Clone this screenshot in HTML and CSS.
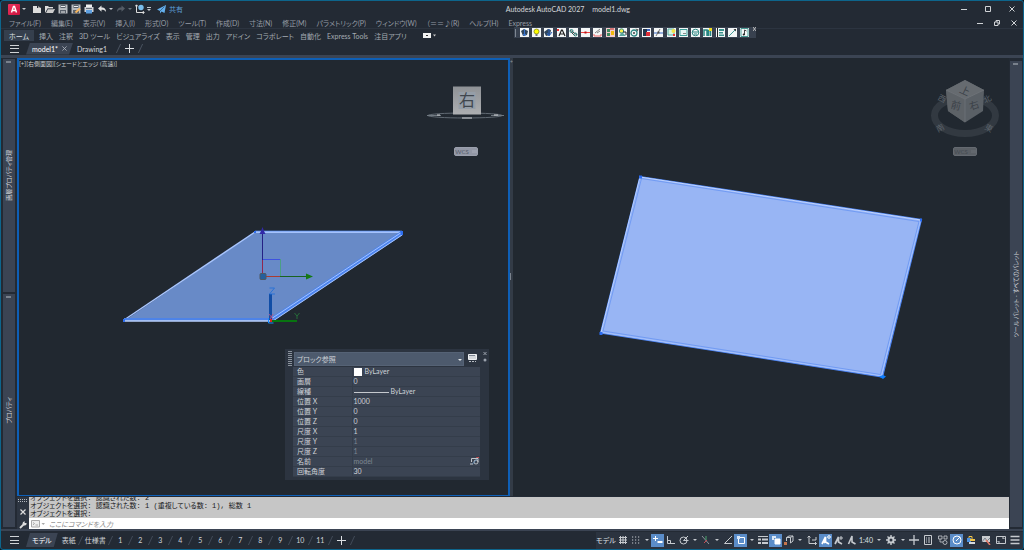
FILE: index.html
```html
<!DOCTYPE html>
<html lang="ja">
<head>
<meta charset="utf-8">
<title>Autodesk AutoCAD 2027 - model1.dwg</title>
<link rel="stylesheet" href="styles.css">
</head>
<body>
<svg class="defs" aria-hidden="true">
  <defs>
    <linearGradient id="face" x1="0" y1="0" x2="0" y2="1"><stop offset="0" stop-color="#8f9296"/><stop offset="1" stop-color="#adafb1"/></linearGradient>
    <linearGradient id="red" x1="0" y1="0" x2="1" y2="1"><stop offset="0" stop-color="#f0335f"/><stop offset="1" stop-color="#c8123c"/></linearGradient>
  </defs>
</svg>
<div class="app">
  <header class="title-bar">
    <div class="quick">
      <button class="logo" aria-label="アプリケーション"><svg width="12" height="11" viewBox="0 0 12 11"><rect width="12" height="11" rx="1" fill="url(#red)"/><path d="M3.500 8.500L5.500 2.500h1L8.500 8.500M4.500 6.500h3" stroke="#fff" stroke-width="1.400" fill="none"/></svg></button>
      <button class="caret" aria-label="メニュー"></button>
      <button class="qi first" aria-label="新規"><svg viewBox="0 0 10 10"><path d="M1 2h4v2h4v5H1z" fill="#ddd"/><path d="M6 2l3 2H6z" fill="#aaa"/></svg></button>
      <button class="qi" aria-label="開く"><svg viewBox="0 0 10 10"><path d="M0 9V2h3l1 1h4v1.500H2.500z" fill="#ddd"/><path d="M3 5h7L8 9H1z" fill="#ccc"/><path d="M2.500 5h6" stroke="#454c56" stroke-width=".7"/></svg></button>
      <button class="qi" aria-label="上書き保存"><svg viewBox="0 0 10 10"><path d="M0.500 0.500h9v9h-9z" fill="#b9bcc0"/><path d="M2.500 1h5v3h-5zM2 6h6v3.500H2z" fill="#59606a"/><path d="M3 2.500h4M3 8h4" stroke="#eee"/></svg></button>
      <button class="qi" aria-label="名前を付けて保存"><svg viewBox="0 0 10 10"><path d="M0.500 0.500h9v9h-9z" fill="#b9bcc0"/><path d="M2.500 1h5v3h-5zM2 6h6v3.500H2z" fill="#59606a"/><path d="M3 2.500h4" stroke="#eee"/><path d="M4.500 8.500L9 4.500" stroke="#f5b660" stroke-width="2"/></svg></button>
      <button class="qi" aria-label="印刷"><svg viewBox="0 0 10 10"><path d="M2 0.500h6V3H2z" fill="#eee"/><path d="M0.500 3h9v5h-9z" fill="#cfd2d6"/><path d="M2 6h6v3.500H2z" fill="#5e9fe0"/><path d="M2 4.500h6" stroke="#6b737d"/></svg></button>
      <button class="qi" aria-label="元に戻す"><svg viewBox="0 0 10 10"><path d="M1 4.500l3.500-3v2C8 3.500 9 5.500 9 8 8 6.300 7 5.700 4.500 5.700v2z" fill="#e3e3e3"/></svg></button>
      <button class="caret" aria-label="履歴"></button>
      <button class="qi" aria-label="やり直し"><svg viewBox="0 0 10 10"><path d="M9 4.500l-3.500-3v2C2 3.500 1 5.500 1 8c1-1.700 2-2.300 4.500-2.300v2z" fill="#555c66"/></svg></button>
      <button class="caret dim" aria-label="やり直し履歴"></button>
      <button class="qi" aria-label="UCS"><svg viewBox="0 0 10 10"><path d="M1.500 1v7.500H9M0 2.500L1.500 0.800 3 2.500M7.800 7L9.200 8.500 7.800 10" stroke="#ddd" fill="none"/><circle cx="6" cy="3.500" r="2.700" fill="#79bdec"/></svg></button>
      <button class="caret bar" aria-label="カスタマイズ"></button>
      <a class="share" href="#"><svg width="9" height="9" viewBox="0 0 9 9"><path d="M0 4.500L9 0 7.500 8 4.500 6.500 3 8.500V6z" fill="#64b0ee"/><path d="M3 6L7.500 1.500" stroke="#26405a" stroke-width=".6"/></svg>共有</a>
    </div>
    <h1 class="title"><span>Autodesk AutoCAD 2027</span><span>model1.dwg</span></h1>
    <div class="win">
      <button aria-label="最小化"><svg viewBox="0 0 6 6"><path d="M0 3.500h6"/></svg></button>
      <button aria-label="最大化"><svg viewBox="0 0 6 6"><path d="M.5.5h5v5h-5z"/></svg></button>
      <button aria-label="閉じる"><svg viewBox="0 0 6 6"><path d="M.5.5l5 5M5.500.5l-5 5"/></svg></button>
    </div>
  </header>

  <div class="menu-row">
    <nav class="menu">
      <button>ファイル(F)</button><button>編集(E)</button><button>表示(V)</button><button>挿入(I)</button><button>形式(O)</button><button>ツール(T)</button><button>作成(D)</button><button>寸法(N)</button><button>修正(M)</button><button>パラメトリック(P)</button><button>ウィンドウ(W)</button><button>（＝＝♪(R)</button><button>ヘルプ(H)</button><button>Express</button>
    </nav>
    <div class="win small">
      <button aria-label="図面を最小化"><svg viewBox="0 0 6 6"><path d="M0 3.500h6"/></svg></button>
      <button aria-label="図面を元のサイズに戻す"><svg viewBox="0 0 6 6"><path d="M.5 2h3.500v3.500H.5zM2 2V.5h3.500V4H4"/></svg></button>
      <button aria-label="図面を閉じる"><svg viewBox="0 0 6 6"><path d="M.5.5l5 5M5.500.5l-5 5"/></svg></button>
    </div>
  </div>

  <nav class="ribbon">
    <button class="on">ホーム</button><button>挿入</button><button>注釈</button><button>3D ツール</button><button>ビジュアライズ</button><button>表示</button><button>管理</button><button>出力</button><button>アドイン</button><button>コラボレート</button><button>自動化</button><button>Express Tools</button><button>注目アプリ</button>
    <button class="ribbon-min" aria-label="リボンを最小化"><svg width="14" height="5" viewBox="0 0 14 5"><path d="M0 0h8v5H0z" fill="#f2f2f2"/><path d="M3 2.500h2" stroke="#333"/><path d="M10 1.500h3L11.500 3.500z" fill="#ccc"/></svg></button>
  </nav>

  <div class="float-bar">
    <i class="grip"></i>
    <div class="tools">
      <button aria-label="画層表示"><svg viewBox="0 0 9 9"><path d="M1 3l3-2 4 2-1 4-4 1z" fill="#31465c"/><path d="M4.500 1v7M3 6l1.500 2L6 6" stroke="#3a75cf" fill="none"/></svg></button>
      <button aria-label="電球"><svg viewBox="0 0 9 9"><circle cx="4.500" cy="3.500" r="2.500" fill="#ff0" stroke="#77750e" stroke-width=".7"/><path d="M3.500 6h2v2h-2z" fill="#777"/></svg></button>
      <button aria-label="画層移動"><svg viewBox="0 0 9 9"><path d="M0 4l4-3 3 1-1 5-4 1z" fill="#31465c"/><path d="M5 1v6M3 5l2 3 3-4" stroke="#2861be" fill="none"/></svg></button>
      <button aria-label="文字"><svg viewBox="0 0 9 9"><path d="M2 8L4.500 2h.8L8 8M3 6h4" stroke="#222" fill="none" stroke-width="1.200"/><path d="M0 1h2v2H0z" fill="#e33"/></svg></button>
      <button aria-label="トリム"><svg viewBox="0 0 9 9"><path d="M1 2l7 5M2 4l4 4" stroke="#444"/><circle cx="2.500" cy="3" r="1.500" stroke="#2b8581" fill="none"/><circle cx="6.500" cy="6.500" r="1.500" stroke="#2b8581" fill="none"/></svg></button>
      <button aria-label="分割"><svg viewBox="0 0 9 9"><path d="M0 4.500h9" stroke="#e44"/><path d="M3.500 3.500h2v2h-2z" fill="#b11"/></svg></button>
      <button aria-label="寸法"><svg viewBox="0 0 9 9"><path d="M1 6V8h7V6" stroke="#e66" fill="none"/><path d="M2 5l5-4M4 5l3-2" stroke="#666" stroke-width=".8"/></svg></button>
      <button aria-label="ブロック"><svg viewBox="0 0 9 9"><path d="M0 0h9v9H0z" fill="#f3cccc"/><path d="M1 1h3v3H1zM1 5h3v3H1z" fill="#3f8b5f"/><path d="M5 3h3v4H5z" fill="#efb90d"/><path d="M4 1h4" stroke="#b22"/></svg></button>
      <button aria-label="図形"><svg viewBox="0 0 9 9"><circle cx="3.500" cy="3" r="2.200" stroke="#318886" fill="#f9ee4c"/><path d="M1 8l3-4 4 4z" fill="#5aa59e"/><path d="M5 4h3v3" stroke="#222" fill="none"/></svg></button>
      <button aria-label="回転"><svg viewBox="0 0 9 9"><circle cx="4" cy="5" r="3" stroke="#2b8581" fill="none" stroke-width="1.300"/><circle cx="4" cy="5" r="1" fill="#444"/><path d="M5.500 .5l3 1-1 2" fill="#555"/></svg></button>
      <button aria-label="グループ"><svg viewBox="0 0 9 9"><path d="M1 1h4v3H1zM1 4h3v4H1z" fill="#24374d"/><path d="M4 4h4v4H4z" fill="#df2e38"/><path d="M5 1h3v2H5z" fill="#3d63bb"/></svg></button>
      <button aria-label="点"><svg viewBox="0 0 9 9"><path d="M0 5h9" stroke="#3b6bc6"/><path d="M2 8l4-7" stroke="#777"/><path d="M3.500 3.500h2v2h-2z" fill="#4a4a4a"/></svg></button>
      <button aria-label="雲"><svg viewBox="0 0 9 9"><path d="M1 1h6v6H1z" fill="#d8f5df" stroke="#55aaa5"/><circle cx="6.500" cy="3" r="2" fill="#f3e348"/><path d="M6 6l2 2M8 6L6 8" stroke="#e33"/></svg></button>
      <button aria-label="枠"><svg viewBox="0 0 9 9"><path d="M1 1.500h7v6H1z" fill="#e8f6f4" stroke="#3c9d98"/><path d="M4 5.500h3" stroke="#888"/></svg></button>
      <button aria-label="ポリゴン"><svg viewBox="0 0 9 9"><circle cx="4.500" cy="4.500" r="3.300" fill="none" stroke="#2a8581"/><path d="M1 4h7M3 6h3" stroke="#2a8581"/></svg></button>
      <button aria-label="連結"><svg viewBox="0 0 9 9"><path d="M1 8V2h3v6M5.500 8V2.500h2V8" fill="none" stroke="#278681" stroke-width="1.500"/><path d="M6 0h3v3H6z" fill="#efdb24"/></svg></button>
      <button aria-label="整列"><svg viewBox="0 0 9 9"><path d="M1.500 0v9" stroke="#222"/><path d="M3 1h5v2H3zM3 4h4v1.500H3zM3 6.500h5V8H3z" fill="#3b918c"/></svg></button>
      <button aria-label="線分"><svg viewBox="0 0 9 9"><path d="M1 8l6-6" stroke="#439c97"/><path d="M5.500 1H8v2.500z" fill="#333"/></svg></button>
      <button aria-label="音符"><svg viewBox="0 0 9 9"><path d="M1 0.500h7v8H1z" fill="none" stroke="#489a94"/><path d="M4.500 7V2l2 1" stroke="#444" fill="none"/><circle cx="3.700" cy="6.500" r="1" fill="#222"/></svg></button>
    </div>
    <button class="float-x" aria-label="ツールバーを閉じる"><svg width="3" height="4" viewBox="0 0 3 4"><path d="M0 0l3 4M3 0L0 4" stroke="#bbb"/></svg></button>
  </div>

  <div class="file-tabs">
    <button class="burger" aria-label="メニュー"></button>
    <button class="tab on"><span>model1*</span><svg width="5" height="5" viewBox="0 0 6 6"><path d="M.5.5l5 5M5.500.5l-5 5" stroke="#aeb4bd"/></svg></button>
    <button class="tab second">Drawing1</button>
    <i class="slash"></i>
    <button class="plus" aria-label="新規図面"></button>
    <i class="slash"></i>
  </div>

  <main class="work">
    <aside class="side">
      <section><i></i><h2>画層プロパティ管理</h2></section>
      <section><i></i><h2>プロパティ</h2></section>
    </aside>
    <div class="center">
      <div class="views">
        <section class="view active">
          <svg class="scene" viewBox="19 60 489 435">
            <path d="M255 232L402 233 271 321H124z" fill="#688ac7"/>
            <path d="M255 232L124 320" stroke="#a9c6ff" stroke-width="1.500"/>
            <path d="M255 232H402" stroke="#a5c2fb" stroke-width="2"/><path d="M255 231h147" stroke="#4b84ee" stroke-width=".7"/>
            <path d="M124 319h147" stroke="#4d83e8" stroke-width="2"/><path d="M125 321h147" stroke="#b8d0ff" stroke-width="1.500"/>
            <path d="M402 233L271 320" stroke="#4c84ee" stroke-width="4"/><path d="M402 232L271 319M402 235L273 321" stroke="#a7c5ff"/>
            <path d="M254 231h2v2h-2zM123 319h2v3h-2zM400 231h3v4h-2z" fill="#2f6ff0"/>
            <path d="M263 259.500h17" stroke="#3d52df"/><path d="M280.500 259v17" stroke="#4b9f85"/>
            <path d="M262.500 232v30" stroke="#252184"/><path d="M262.500 260v17" stroke="#8f274f"/>
            <path d="M259.500 234l1.500-3 1.500-4 1.500 4 1.500 3z" fill="#312aa8"/>
            <path d="M263 276.500h17" stroke="#aa3c30"/><path d="M280 276.500h27" stroke="#19631f"/><path d="M306 273.500l7 3-7 3z" fill="#157915"/>
            <rect x="260" y="273.500" width="6" height="6" rx="1" fill="#24609e" stroke="#4f5962"/>
            <path d="M270.500 294v26" stroke="#104da6" stroke-width="3"/><path d="M272 321h25" stroke="#087410" stroke-width="2"/>
            <path d="M268.500 318v5h5" stroke="#168bff" fill="none"/><path d="M269 314l4 5M273 314l-3 5" stroke="#c75083" stroke-width=".8"/><path d="M270 319h2v3h-2z" fill="#df2424"/>
            <path d="M269.500 288h5l-5 6h5.500" stroke="#2470d8" fill="none" stroke-width=".9"/>
            <path d="M294.500 313l2.500 3 2.500-3M297 316v3" stroke="#27743b" fill="none" stroke-width=".9"/>
          </svg>
          <div class="view-label"><button>[+]</button><button>[右側面図]</button><button>[シェードとエッジ (高速)]</button></div>
          <div class="cube-left">
            <svg width="78" height="36" viewBox="427 85 78 36">
              <ellipse cx="465" cy="115.500" rx="37" ry="2.500" fill="none" stroke="#606972"/><path d="M427 115.500h14M491 115.500h13" stroke="#707981"/><path d="M437 115h3M494 115h4M462 118h10" stroke="#d4d7da"/>
              <rect x="453" y="86.500" width="28" height="28" fill="url(#face)"/><path d="M458.500 92h17v17h-17z" fill="#959ea8"/>
              <text class="cube-char" x="459" y="106">右</text>
            </svg>
            <button class="wcs">WCS<i></i></button>
          </div>
          <div class="props">
            <i class="dots"></i>
            <div class="props-body">
              <div class="props-head">
                <select aria-label="オブジェクトの種類"><option>ブロック参照</option></select>
                <button aria-label="カスタマイズ"><svg width="9" height="9" viewBox="0 0 9 9"><path d="M.5.5h8v5h-8z" fill="#d5d8dc" stroke="#eef0f2"/><path d="M1 1.500h6" stroke="#566070" stroke-width=".7"/><path d="M1 7.500h7" stroke="#b9bec5" stroke-dasharray="2 1"/></svg></button>
              </div>
              <table>
                <tr><th scope="row">色</th><td><i class="chip"></i>ByLayer</td></tr>
                <tr><th scope="row">画層</th><td>0</td></tr>
                <tr><th scope="row">線種</th><td><i class="line"></i>ByLayer</td></tr>
                <tr><th scope="row">位置 X</th><td>1000</td></tr>
                <tr><th scope="row">位置 Y</th><td>0</td></tr>
                <tr><th scope="row">位置 Z</th><td>0</td></tr>
                <tr><th scope="row">尺度 X</th><td>1</td></tr>
                <tr><th scope="row">尺度 Y</th><td class="off">1</td></tr>
                <tr><th scope="row">尺度 Z</th><td class="off">1</td></tr>
                <tr><th scope="row">名前</th><td class="off"><span class="named">model<svg width="9" height="8" viewBox="0 0 9 8"><path d="M1.500 5V1.500H8V5M0 7h3" stroke="#d3d5d8" fill="none" stroke-width=".9"/><circle cx="6" cy="5" r="2" fill="none" stroke="#d3d5d8" stroke-width=".8"/><path d="M6 0l3 .5" stroke="#e35656"/><path d="M2.500 7L7 2" stroke="#62a1da" stroke-width=".6"/></svg></span></td></tr>
                <tr><th scope="row">回転角度</th><td>30</td></tr>
              </table>
            </div>
            <div class="props-side"><svg width="4" height="12" viewBox="0 0 4 12"><path d="M.5 1l3 3M3.500 1l-3 3" stroke="#9aa1ab"/><circle cx="2" cy="9" r="1.500" fill="#9aa1ab"/></svg></div>
          </div>
        </section>
        <div class="split"><i>+</i><i class="mid"></i></div>
        <section class="view">
          <svg class="scene" viewBox="513 58 496 438">
            <path d="M640 176.500L921.500 219.500 882.500 377 600.500 333z" fill="#98b5f4" stroke="#4b82ef" stroke-width="1.200"/>
            <path d="M601 332.500L640 177 921 220" fill="none" stroke="#c0d4ff" stroke-width="1"/>
            <path d="M603 331L641.500 178.500 919 221.500 880.500 374.500z" fill="none" stroke="#6794f3" stroke-width=".8"/>
            <path d="M602 332.500L881.500 376 920.500 221" fill="none" stroke="#a9c5ff" stroke-width=".9"/>
            <path d="M639 175.500h3v3h-3zM599.500 332h3v3h-3zM920 218.500h2v3h-2z" fill="#2b6cf1"/><path d="M879 376.500l4-1.500 3 1.500-3 2.500z" fill="#0e7eff"/>
          </svg>
          <div class="cube-right">
            <svg width="74" height="62" viewBox="928 78 74 62">
              <ellipse cx="965" cy="115.500" rx="30.500" ry="18" fill="none" stroke="#323941" stroke-width="7"/>
              <g class="compass"><text x="938" y="102" transform="rotate(28 943 99)">西</text><text x="983" y="102" transform="rotate(-28 987 99)">北</text><text x="936" y="131" transform="rotate(-28 940 128)">南</text><text x="985" y="131" transform="rotate(28 989 128)">東</text></g>
              <path d="M965 80l19 10-1 21-18 11.500-17-11.500-2-21z" fill="#5a6066"/>
              <path d="M965 80l19 10-19 9-19-9z" fill="#666b70"/><path d="M965 99v23.500L948 111l-2-21z" fill="#5d6267"/>
              <path d="M946 90l19 9 19-9M965 99v23" stroke="#71767b" fill="none" stroke-width=".7"/>
              <g class="cube-small"><text x="960" y="94" transform="rotate(25 964 90)">上</text><text x="951" y="109" transform="rotate(14 956 105)">前</text><text x="969" y="109" transform="rotate(-18 974 105)">右</text></g>
            </svg>
            <button class="wcs dark">WCS<i></i></button>
          </div>
        </section>
      </div>
      <section class="cmd">
        <div class="cmd-side">
          <svg width="10" height="4" viewBox="0 0 10 4"><path d="M0 .5h10M0 2.500h10" stroke="#b3b8bf" stroke-dasharray="1 1"/></svg>
          <button aria-label="閉じる"><svg width="6" height="6" viewBox="0 0 6 6"><path d="M.5.5l5 5M5.500.5l-5 5" stroke="#ddd" stroke-width="1.200"/></svg></button>
          <button aria-label="設定"><svg width="8" height="8" viewBox="0 0 8 8"><path d="M1 7l4-4" stroke="#ddd" stroke-width="1.800"/><path d="M7.500 2A2 2 0 1 1 6 .5L5.500 2z" fill="#ddd"/></svg></button>
        </div>
        <div class="cmd-body">
          <div class="log"><p>オブジェクトを選択: 認識された数: 2</p><p>オブジェクトを選択: 認識された数: 1 (重複している数: 1), 総数 1</p><p>オブジェクトを選択:</p></div>
          <label class="prompt"><svg width="14" height="8" viewBox="0 0 14 8"><path d="M.5.5h8v6.500h-8z" fill="#eee" stroke="#aaa"/><path d="M2 2.500l1.500 1L2 5M4.500 5H7" stroke="#999" fill="none" stroke-width=".8"/><path d="M10.500 3h3.500L12.300 5z" fill="#aaa"/></svg><input type="text" aria-label="コマンド" placeholder="ここにコマンドを入力"></label>
        </div>
      </section>
    </div>
    <aside class="side right">
      <section><i></i><h2>ツール パレット - すべてのパレット</h2></section>
    </aside>
  </main>

  <footer class="status">
    <div class="layouts">
      <button class="burger" aria-label="レイアウト"></button>
      <button class="tab on model">モデル</button>
      <button class="lay">表紙</button><i class="slash"></i><button class="lay">仕様書</button><i class="slash"></i>
      <button class="num">1</button><i class="slash"></i><button class="num">2</button><i class="slash"></i><button class="num">3</button><i class="slash"></i><button class="num">4</button><i class="slash"></i><button class="num">5</button><i class="slash"></i><button class="num">6</button><i class="slash"></i><button class="num">7</button><i class="slash"></i><button class="num">8</button><i class="slash"></i><button class="num">9</button><i class="slash"></i><button class="num">10</button><i class="slash"></i><button class="num">11</button><i class="slash"></i>
      <button class="plus" aria-label="新規レイアウト"></button><i class="slash"></i>
    </div>
    <div class="modes">
      <button class="txt">モデル</button>
      <button class="m" aria-label="グリッド"><svg viewBox="0 0 10 10"><path d="M2.500 1v8M5 1v8M7.500 1v8M1 2.500h8M1 5h8M1 7.500h8"/></svg></button>
      <button class="m" aria-label="スナップ"><svg viewBox="0 0 10 10"><path d="M1 2h8M1 5h8M1 8h8" stroke-dasharray="1.200 1.800" stroke-width="1.200"/></svg></button>
      <button class="caret" aria-label="スナップ設定"></button>
      <button class="m on" aria-label="ダイナミック入力"><svg viewBox="0 0 10 10"><path d="M0 3.500h5M2.500 1v5"/><path d="M4.500 7h5" stroke-width="2"/></svg></button>
      <button class="m" aria-label="直交"><svg viewBox="0 0 10 10"><path d="M1.500 1v7.500H9M1.500 5.500h3v3"/></svg></button>
      <button class="m" aria-label="極"><svg viewBox="0 0 10 10"><circle cx="4.500" cy="5.500" r="3.500"/><path d="M4.500 5.500L9 1M4.500 5.500h5"/></svg></button>
      <button class="caret" aria-label="極設定"></button>
      <button class="m" aria-label="アイソメ"><svg viewBox="0 0 10 10"><path d="M1 1l7 8" stroke="#8c939c"/><path d="M5 1v4" stroke="#48a56c"/><path d="M3 8l3-3" stroke="#cb4b50"/></svg></button>
      <button class="caret" aria-label="アイソメ設定"></button>
      <button class="m" aria-label="スナップトラック"><svg viewBox="0 0 10 10"><path d="M9 1L1.500 8.500H9"/></svg></button>
      <button class="m on" aria-label="オブジェクトスナップ"><svg viewBox="0 0 10 10"><path d="M2.500 2.500h6v6h-6z"/><path d="M1 1h3v3H1z" fill="#d9e7f7" stroke="none"/></svg></button>
      <button class="caret" aria-label="スナップ点"></button>
      <button class="m" aria-label="線の太さ"><svg viewBox="0 0 10 10"><path d="M0 1.500h10"/><path d="M0 4.500h3M4 4.500h6" stroke-width="2"/><path d="M0 8h3M4 8h6" stroke-width="2"/></svg></button>
      <button class="m on" aria-label="選択の循環"><svg viewBox="0 0 10 10"><path d="M4 4h5v5H4z" fill="#fff"/><path d="M1 1h4v2H3v2H1z" fill="#dce8f6" stroke="none"/></svg></button>
      <button class="m" aria-label="3D オブジェクトスナップ"><svg viewBox="0 0 10 10"><path d="M2.500 2.500L5 1h4v5L6.500 8M2.500 2.500h4v5.500M6.500 2.500L9 1M2.500 2.500V6"/><path d="M0 7h3v3H0z" fill="#c8754a" stroke="none"/></svg></button>
      <button class="caret" aria-label="3D 設定"></button>
      <button class="w" aria-label="ダイナミック UCS"><svg viewBox="0 0 10 10"><path d="M2 1v7.500h7.500M.5 2.500L2 1l1.500 1.500M8 7l1.500 1.500L8 10M5 5h4V2"/></svg></button>
      <button class="m on" aria-label="注釈オブジェクト"><svg viewBox="0 0 10 10"><path d="M1 9l3.500-7v5l3.500 2M4.500 6L3 8" stroke-width="1.700"/><circle cx="8" cy="2" r="1.300"/></svg></button>
      <button class="m" aria-label="自動尺度"><svg viewBox="0 0 10 10"><path d="M1 9l3.500-7v5L8 9" stroke-width="1.700"/><path d="M7 1v4M5.500 3H9"/></svg></button>
      <button class="m" aria-label="注釈尺度"><svg viewBox="0 0 10 10"><path d="M1.500 9L5 1v6l3.500 2" stroke-width="1.600"/></svg></button>
      <button class="txt scale">1:40</button>
      <button class="caret" aria-label="尺度"></button>
      <button class="w" aria-label="ワークスペース"><svg viewBox="0 0 10 10"><circle cx="5" cy="5" r="2.500" stroke-width="2"/><path d="M5 0v2M5 8v2M0 5h2M8 5h2M1.500 1.500L3 3M7 7l1.500 1.500M1.500 8.500L3 7M7 3l1.500-1.500" stroke-width="1.400"/></svg></button>
      <button class="caret" aria-label="ワークスペース切替"></button>
      <button class="m" aria-label="注釈モニター"><svg viewBox="0 0 10 10"><path d="M5 0v10M0 5h10" stroke-width="1.300"/></svg></button>
      <button class="w" aria-label="単位"><svg viewBox="0 0 10 10"><path d="M1.500.5h7v9h-7zM3 3h1M5 3h2M3 5h1M5 5h2M3 7h1M5 7h2"/></svg></button>
      <button class="w" aria-label="クイックプロパティ"><svg viewBox="0 0 10 10"><path d="M.5 1h3.500v3H.5zM6 1h3v3H6zM2 4v3h3" stroke-width=".8"/><circle cx="7" cy="7.500" r="2" stroke-width=".8"/></svg></button>
      <button class="m on" aria-label="グラフィックス"><svg viewBox="0 0 10 10"><circle cx="5" cy="5" r="4"/><path d="M4 6l4-4"/></svg></button>
      <button class="w" aria-label="ロック"><svg viewBox="0 0 10 10"><path d="M3 4V1.500h3V4" stroke="#f2c54a"/><path d="M1 3h4v4H1z" fill="#4d91df" stroke="none"/><path d="M4 4h5v2H4z" fill="#f2c54a" stroke="none"/><path d="M3 8h6" stroke="#d6dade" stroke-width="2"/></svg></button>
      <button class="w" aria-label="画像"><svg viewBox="0 0 10 10"><path d="M1 1h8v6H1z" fill="#c9ccd0" stroke="none"/><path d="M1 7l3-4 2 3 3-3" stroke="#7b838d"/><path d="M5 5l4 5" stroke="#e67a66" stroke-width="1.500"/></svg></button>
      <button class="w" aria-label="全画面"><svg viewBox="0 0 10 10"><path d="M.5 1.500h9v7h-9zM2 6v1h2M8 4V3H6"/></svg></button>
      <button class="m" aria-label="カスタマイズ"><svg viewBox="0 0 10 10"><path d="M.5 1.500h9M.5 5h9M.5 8.500h9" stroke-width="1.300"/></svg></button>
    </div>
  </footer>
</div>
</body>
</html>
```
FILE: styles.css
```css
* { box-sizing: border-box; }
body {
  margin: 0;
  background: #10161d;
  color: #c4c8cd;
  font: 7px/10px Lato, "Noto Sans CJK JP", sans-serif;
  font-feature-settings: "palt";
}
button, select, input {
  margin: 0; padding: 0; border: 0;
  background: none; color: inherit;
  font: inherit; font-feature-settings: inherit;
}
button { display: inline-flex; align-items: center; justify-content: center; flex: none; white-space: nowrap; }
h1, h2, p { margin: 0; font-size: inherit; font-weight: inherit; }
svg { display: block; flex: none; }
.defs { position: absolute; width: 0; height: 0; }

.app {
  position: relative;
  display: flex; flex-direction: column;
  height: 100vh;
  border: 1px solid #0d658c;
  border-radius: 3px;
  background: #232a34;
  overflow: hidden;
}

/* title bar */
.title-bar { display: flex; align-items: center; height: 16px; }
.quick { display: flex; align-items: center; width: 49%; padding-left: 7px; }
.qi { width: 13px; height: 10px; }
.qi svg { width: 10px; height: 10px; }
.qi.first { margin-left: 3px; }
.caret { width: 9px; height: 12px; }
.quick .caret { width: 6px; }
.quick .logo { margin-right: 1px; }
.caret::before { content: ""; border: 2px solid transparent; border-top-color: #c4c8cd; border-bottom: 0; }
.caret.dim::before { border-top-color: #6b727c; }
.caret.bar { flex-direction: column; gap: 1px; }
.caret.bar::before { order: 2; }
.caret.bar::after { content: ""; width: 4px; height: 1px; background: #c4c8cd; order: 1; }
.share { display: flex; align-items: center; gap: 3px; margin-left: 5px; color: #5d9fd6; text-decoration: none; }
.title { display: flex; gap: 8px; margin-left: 4px; color: #d5d8db; }
.win { display: flex; justify-content: flex-end; gap: 18px; margin-left: auto; padding-right: 8px; }
.win svg { width: 6px; height: 6px; fill: none; stroke: #d0d3d6; stroke-width: 1; }
.win.small { gap: 11px; padding-right: 6px; }

.menu-row { display: flex; align-items: center; justify-content: space-between; height: 12px; border-bottom: 1px solid #2c3440; }
.menu { display: flex; gap: 10px; padding-left: 8px; color: #969ca4; }

.ribbon { display: flex; align-items: center; height: 13px; padding-left: 3px; color: #a4aab2; }
.ribbon button { height: 11px; padding: 0 3px; }
.ribbon .on { margin-right: 2px; padding: 0 5px; background: #353f4d; color: #dde0e4; }
.ribbon .ribbon-min { margin-left: 10px; }

.float-bar {
  position: absolute; left: 513px; top: 26px;
  display: flex; align-items: center; gap: 4px;
  width: 242px; height: 11px; padding-left: 1px;
  background: #38414f;
}
.grip { width: 1px; height: 8px; background: #7e8792; }
.tools { flex: 1; display: flex; justify-content: space-between; }
.tools button { width: 9px; height: 9px; background: #f4f7f7; }
.tools svg { width: 9px; height: 9px; }
.float-x { align-self: flex-start; }

/* drawing tabs */
.file-tabs { display: flex; align-items: center; height: 13px; padding-left: 9px; }
.burger {
  width: 9px; height: 8px; margin-right: 7px;
  border-top: 1px solid #d0d3d6; border-bottom: 1px solid #d0d3d6;
}
.burger::before { content: ""; width: 100%; height: 1px; background: #d0d3d6; }
.tab { height: 12px; padding: 0 6px; gap: 4px; color: #d5d8db; }
.tab.on {
  background: #3b4453; color: #fff;
  clip-path: polygon(4px 0, 100% 0, calc(100% - 4px) 100%, 0 100%);
}
.tab.second { padding: 0 11px 0 4px; }
.slash { flex: none; width: 1px; height: 9px; background: #4b5461; transform: skewX(-25deg); }
.plus {
  width: 21px; height: 9px;
  background: linear-gradient(#dde0e3, #dde0e3) center / 9px 1px no-repeat, linear-gradient(#dde0e3, #dde0e3) center / 1px 9px no-repeat;
}

/* work area */
.work { flex: 1; display: flex; min-height: 0; border-top: 3px solid #3b4453; }
.side { display: flex; flex-direction: column; gap: 2px; width: 16px; padding: 1px 2px 2px; }
.side.right { width: 14px; padding: 3px 1px 2px; }
.side section {
  position: relative; flex: 1;
  display: flex; align-items: center; justify-content: center;
  background: #3b4453;
}
.side i { position: absolute; top: 2px; left: 3px; width: 5px; height: 2px; background: #79818c; }
.side h2 { writing-mode: vertical-rl; text-orientation: sideways; transform: rotate(180deg); white-space: nowrap; font-size: 6px; color: #d0d4d9; }
.center { flex: 1; display: flex; flex-direction: column; min-width: 0; }
.views { flex: 1; display: grid; grid-template-columns: 493fr 3px 496fr; min-height: 0; background: #3b4453; }
.view { position: relative; min-width: 0; background: #212830; overflow: hidden; }
.view.active { border: 1px solid #0e5fb6; border-width: 2px 2px 1px; }
.scene { position: absolute; inset: 0; width: 100%; height: 100%; }
.view-label { position: relative; display: flex; color: #c4c8cd; font-size: 6px; line-height: 8px; }
.split { display: flex; flex-direction: column; justify-content: space-between; background: #333b46; font-size: 5px; line-height: 8px; color: #8d949d; }
.split i { font-style: normal; }
.split .mid { height: 7px; margin-bottom: 216px; border-left: 1px solid #7b838d; }

.cube-left, .cube-right { position: absolute; display: flex; flex-direction: column; align-items: center; }
.cube-left { top: 25px; right: 3px; gap: 26px; }
.cube-right { top: 20px; right: 7px; gap: 7px; }
.cube-char { font-size: 16px; fill: #40464d; }
.cube-small { font-size: 10px; fill: #3b4148; }
.compass { font-size: 8px; fill: #5c636b; }
.wcs {
  width: 24px; height: 9px; gap: 3px;
  border-radius: 2px; border: 1px solid #9a9fac;
  background: #9297a5; color: #555c6b;
  font-size: 6px; line-height: 7px;
}
.wcs i { width: 5px; height: 3px; background: #9da2af; }
.wcs.dark { border-color: #646970; background: #5b6066; color: #444a51; }
.wcs.dark i { background: #62676d; }

.props {
  position: absolute; right: 19px; bottom: 15px;
  display: flex; width: 204px; padding: 2px 0 3px 3px;
  background: #2c3440;
  color: #ced2d7;
}
.dots { width: 4px; height: 15px; margin-right: 1px; background: repeating-linear-gradient(#8a929c 0 1px, transparent 1px 2px); }
.props-body { flex: 1; }
.props-head { position: relative; display: flex; align-items: center; gap: 4px; height: 16px; padding: 0 3px 0 1px; }
.props-head select {
  flex: 1; height: 14px; padding: 0 2px;
  appearance: none;
  border: 1px solid #556275;
  background: #4d5a6d;
}
.props-head::after {
  content: ""; position: absolute; right: 18px; top: 8px;
  border: 2px solid transparent; border-top-color: #e2e5e8; border-bottom: 0;
}
.props table { width: 100%; border-collapse: collapse; background: #3b4453; }
.props tr { height: 10px; border-bottom: 1px solid #343d4a; }
.props th, .props td { padding: 0 0 0 4px; font-weight: normal; text-align: left; line-height: 9px; white-space: nowrap; }
.props th { width: 59px; border-right: 1px solid #343d4a; }
.props td { padding-left: 1px; }
.props .off { color: #7d8691; }
.chip, .line { display: inline-block; vertical-align: middle; background: #fff; }
.chip { width: 8px; height: 8px; margin-right: 3px; }
.line { width: 35px; height: 1px; margin-right: 2px; background: #c5c9ce; }
.named { display: flex; justify-content: space-between; padding-right: 1px; }
.props-side { display: flex; justify-content: center; width: 9px; }

/* command line */
.cmd { display: flex; height: 32px; margin-top: 1px; background: #fff; }
.cmd-side { display: flex; flex-direction: column; align-items: center; gap: 6px; width: 12px; padding-top: 2px; background: #2d3541; }
.cmd-body { flex: 1; display: flex; flex-direction: column; min-width: 0; }
.log {
  display: flex; flex-direction: column; justify-content: flex-end;
  height: 21px; padding-left: 1px;
  background: #c6c6c6; color: #16181a;
  font-family: "Liberation Mono", "Noto Sans CJK JP", monospace; line-height: 8px;
  overflow: hidden; white-space: nowrap;
}
.prompt { display: flex; align-items: center; gap: 4px; height: 11px; padding-left: 2px; }
.prompt input { flex: 1; min-width: 0; height: 10px; font-style: italic; outline: 0; color: #222; }
.prompt input::placeholder { color: #8a8a8a; opacity: 1; }

/* status bar */
.status { display: flex; justify-content: space-between; align-items: center; height: 20px; border-top: 2px solid #3b4453; }
.layouts { display: flex; align-items: center; padding-left: 9px; color: #d0d3d7; }
.layouts .tab { height: 14px; }
.layouts .slash { background: #434c59; }
.lay { padding: 0 4px; }
.num { width: 19px; }
.modes { display: flex; align-items: center; height: 17px; padding-right: 2px; background: #2b333f; }
.txt { width: 20px; color: #dde0e3; }
.scale { width: 16px; }
.m, .w { width: 13px; height: 13px; }
.w { width: 15px; }
.m svg, .w svg { width: 10px; height: 10px; fill: none; stroke: #c6cacf; stroke-width: 1; }
.modes .on { background: #5b8dc9; }
.modes .on svg { stroke: #fff; }
```
